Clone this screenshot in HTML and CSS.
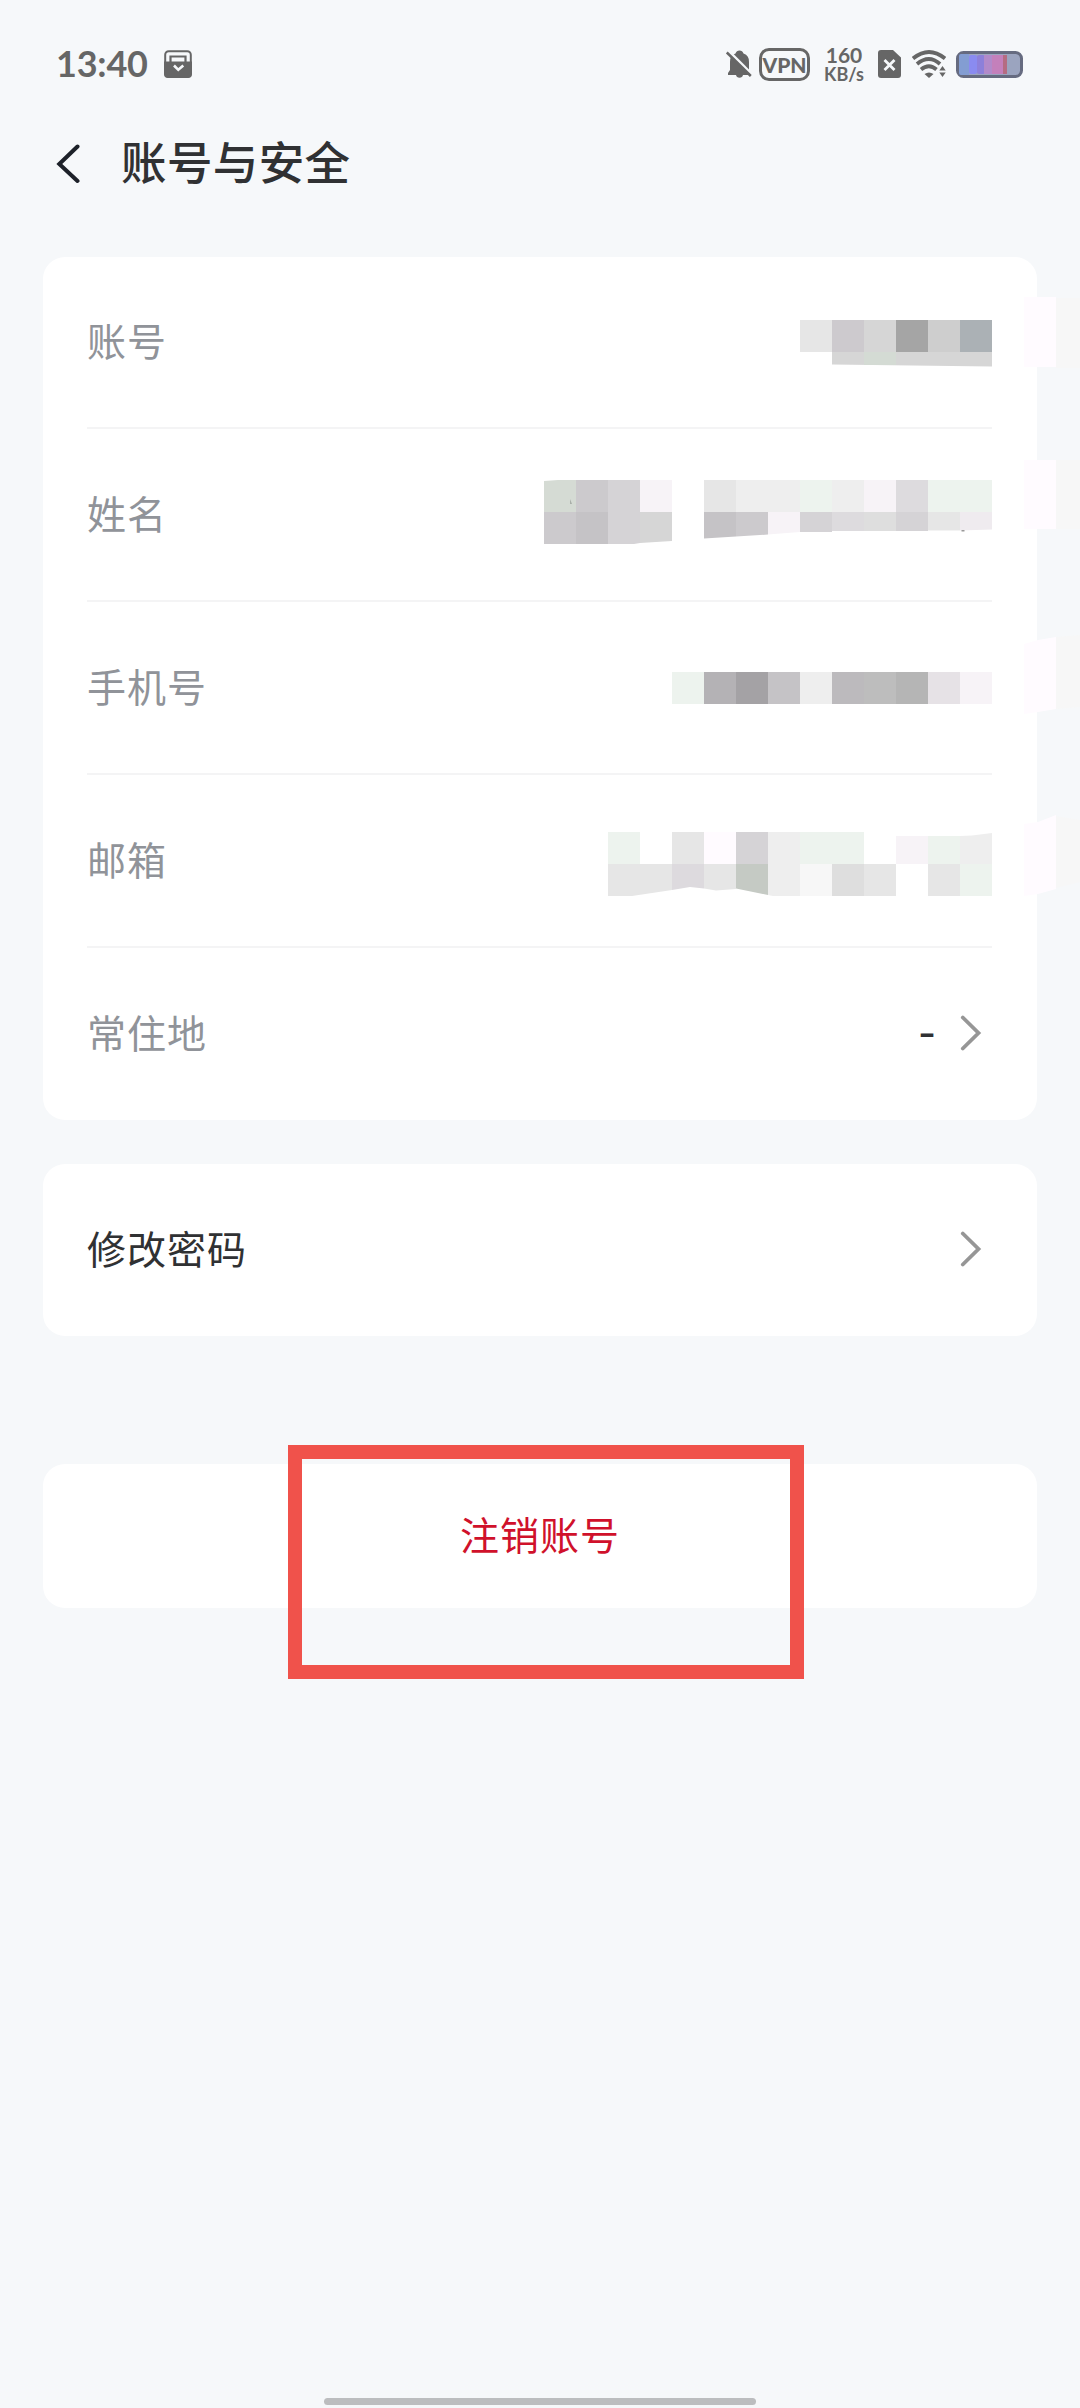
FILE: index.html
```html
<!DOCTYPE html>
<html lang="zh-CN">
<head>
<meta charset="utf-8">
<title>账号与安全</title>
<link rel="stylesheet" href="styles.css">
</head>
<body>
<div class="screen">
  <header class="status">
    <span class="clock">13:40</span>
    <svg class="wallet" width="28" height="28" viewBox="0 0 28 28"><rect x="1.200" y="1.200" width="25.600" height="25.600" rx="3.500" fill="none" stroke="#666" stroke-width="2"/><path d="M6.500 12V6.500h15V12" fill="none" stroke="#666" stroke-width="2.200"/><path d="M0 11.500h28V24a4 4 0 0 1-4 4H4a4 4 0 0 1-4-4z" fill="#666"/><path d="M10 15.500l4.300 4.300 5-4.300" fill="none" stroke="#f6f8fa" stroke-width="2.600"/></svg>
    <div class="status-right">
      <svg class="bell" width="26" height="30" viewBox="0 0 26 30"><path d="M2 25v-2l2-3v-8a8.500 8.500 0 0 1 5.500-8.500q1-3 4-3t4 3A8.500 8.500 0 0 1 23 12v8l1 3v2h-7a3.600 3.600 0 0 1-7 0z" fill="#666"/><path d="M1 -.5l26 26" stroke="#f6f8fa" stroke-width="3"/><path d="M.8 2.500l24 23.500" stroke="#666" stroke-width="2.600"/></svg>
      <span class="vpn">VPN</span>
      <span class="speed"><b>160</b><i>KB/s</i></span>
      <svg class="sim" width="23" height="28" viewBox="0 0 23 28"><path d="M3 0h12l8 7.500V25a3 3 0 0 1-3 3H3a3 3 0 0 1-3-3V3a3 3 0 0 1 3-3z" fill="#666"/><path d="M6.500 10l10 10M16.500 10l-10 10" stroke="#f6f8fa" stroke-width="2.800"/></svg>
      <svg class="wifi" width="34" height="28" viewBox="0 0 34 28"><g fill="none" stroke="#666" stroke-width="3.800"><path d="M1 8.500q16-13 32 0"/><path d="M5 14q12-10 23 0"/><path d="M9 19.500q8-6.500 15.500 0"/></g><path d="M12.500 24q4.500-3 9 0L17 28z" fill="#666"/><path d="M30.500 16l3.200 4.500h-6.400zM27.300 22.500h6.400l-3.200 4.500z" fill="#666"/></svg>
      <svg class="battery" width="67" height="27" viewBox="0 0 67 27"><rect x="1.500" y="1.500" width="64" height="24" rx="6" fill="#9ba4bf" stroke="#666b80" stroke-width="3"/><path d="M5 3h8v21H5q-2 0-2-2V5q0-2 2-2z" fill="#839dd2"/><rect x="13" y="4" width="8" height="19" rx="2" fill="#8a8bf0"/><rect x="21" y="4" width="8" height="19" rx="2" fill="#8d80da"/><path d="M28 4h9v19h-9z" fill="#b28aca"/><path d="M36 4h11v19H36z" fill="#c480bb"/><path d="M47 4h4v19h-4z" fill="#b56c82"/></svg>
    </div>
  </header>

  <nav class="title-bar">
    <svg width="26" height="42" viewBox="0 0 26 42"><path d="M23.500 3.500L5.300 21l18.200 17" fill="none" stroke="#1d2129" stroke-width="4" stroke-linecap="round" stroke-linejoin="miter"/></svg>
    <h1>账号与安全</h1>
  </nav>

  <main>
    <section class="card info">
      <div class="row"><span class="label">账号</span>
        <svg class="mosaic" width="192" height="170" viewBox="800 257 192 170">
          <path fill="#e6e6e6" d="M800 320h32v32h-32z"/><path fill="#cdcace" d="M832 320h32v32h-32z"/><path fill="#d6d6d6" d="M864 320h32v32h-32z"/><path fill="#a5a5a5" d="M896 320h32v32h-32z"/><path fill="#cecece" d="M928 320h32v32h-32z"/><path fill="#abb1b5" d="M960 320h32v32h-32z"/><path fill="#d6d6d6" d="M832 352h160v14.500l-160-2z"/><path fill="#d4dbd4" d="M864 352h32v13h-32z"/>
          <path fill="#fffbff" d="M1024 297h32v70h-32z"/><path fill="#f7f7f7" d="M1056 298h24v70h-24z"/>
        </svg></div>
      <div class="row"><span class="label">姓名</span>
        <svg class="mosaic" width="448" height="171" viewBox="544 429 448 171">
          <path fill="#d5dbd4" d="M544 481l14-1h18v32h-32z"/><path fill="#cccacd" d="M576 480h32v32h-32z"/><path fill="#d5d3d6" d="M608 480h32v32h-32z"/><path fill="#f7f3f7" d="M640 480h32v32h-32z"/>
          <path fill="#cccacd" d="M544 512h32v32h-32z"/><path fill="#c5c3c6" d="M576 512h32v32h-32z"/><path fill="#d5d3d6" d="M608 512h32v31l-6 1h-26z"/><path fill="#d6d6d6" d="M640 512h32v29l-32 2z"/>
          <path fill="#e6e6e6" d="M704 480h32v32h-32z"/><path fill="#eee" d="M736 480h64v32h-64zM832 480h32v32h-32z"/><path fill="#edf3ee" d="M800 480h32v32h-32zM928 480h64v32h-64z"/><path fill="#f7f3f7" d="M864 480h32v32h-32z"/><path fill="#dddbde" d="M896 480h32v32h-32z"/>
          <path fill="#c5c3c6" d="M704 512h32v24.500l-32 2z"/><path fill="#cccacd" d="M736 512h32v22.500l-32 2z"/><path fill="#f7f3f7" d="M768 512h32v20l-32 2.500z"/><path fill="#d5d3d6" d="M800 512h32v20h-32zM896 512h32v19h-32z"/><path fill="#dddbde" d="M832 512h32v19h-32z"/><path fill="#dedede" d="M864 512h32v19h-32z"/><path fill="#e6e6e6" d="M928 512h32v18.500h-32z"/><path fill="#efebef" d="M960 512h32v17.500l-32 1z"/><path fill="#999" d="M961.500 530h3v1.500h-3z"/><path fill="#a9afa9" d="M570 499l2 5h-2z"/>
          <path fill="#fffbff" d="M1024 460h32v69h-32z"/><path fill="#f7f7f7" d="M1056 460h24v69h-24z"/>
        </svg></div>
      <div class="row"><span class="label">手机号</span>
        <svg class="mosaic" width="320" height="171" viewBox="672 602 320 171">
          <path fill="#edf3ee" d="M672 672h32v32h-32z"/><path fill="#b4b2b5" d="M704 672h32v32h-32z"/><path fill="#a4a2a5" d="M736 672h32v32h-32z"/><path fill="#c5c3c6" d="M768 672h32v32h-32z"/><path fill="#eee" d="M800 672h32v32h-32z"/><path fill="#bcbabd" d="M832 672h32v32h-32z"/><path fill="#bdbdbd" d="M864 672h32v32h-32z"/><path fill="#b5b5b5" d="M896 672h32v32h-32z"/><path fill="#e6e2e6" d="M928 672h32v32h-32z"/><path fill="#f7f3f7" d="M960 672h32v32h-32z"/>
          <path fill="#fffbff" d="M1024 644l14-4 18-3v72l-18 3-14 2z"/><path fill="#f7f7f7" d="M1056 637l24-2v72l-24 2z"/>
        </svg></div>
      <div class="row"><span class="label">邮箱</span>
        <svg class="mosaic" width="384" height="171" viewBox="608 775 384 171">
          <path fill="#edf3ee" d="M608 832h32v32h-32zM800 832h64v32h-64zM928 836h32v28h-32zM960 864h32v32h-32z"/><path fill="#e6e6e6" d="M672 832h32v32h-32zM864 864h32v32h-32zM928 864h32v32h-32z"/><path fill="#fffbff" d="M704 832h32v32h-32z"/><path fill="#d5d3d6" d="M736 832h32v32h-32z"/><path fill="#eee" d="M768 832h32v64h-27l-5-1zM960 836l12-.5 20-2.500v31h-32z"/><path fill="#f7f3f7" d="M896 836h32v28h-32z"/>
          <path fill="#e6e6e6" d="M608 864h64v26l-40 6h-24zM704 864h32v25l-20 1.500-12-2z"/><path fill="#dddade" d="M672 864h32v24.500l-14-1.500-18 3z"/><path fill="#c5cac4" d="M736 864h32v31l-32-6.500z"/><path fill="#f7f7f7" d="M800 864h32v32h-32z"/><path fill="#dedede" d="M832 864h32v32h-32z"/>
          <path fill="#fffbff" d="M1024 824l14-2 18-7v74l-18 5-14 2z"/><path fill="#f7f7f7" d="M1056 816l24 4v62l-24 6z"/>
        </svg></div>
      <div class="row"><span class="label">常住地</span>
        <span class="value">-</span>
        <svg class="chevron" width="22" height="36" viewBox="0 0 22 36"><path d="M2.800 2.500L18.500 18 2.800 33.500" fill="none" stroke="#969696" stroke-width="3.800" stroke-linecap="round"/></svg></div>
    </section>

    <section class="card password">
      <span class="action">修改密码</span>
      <svg class="chevron" width="22" height="36" viewBox="0 0 22 36"><path d="M2.800 2.500L18.500 18 2.800 33.500" fill="none" stroke="#969696" stroke-width="3.800" stroke-linecap="round"/></svg>
    </section>

    <section class="card cancel"><span class="action">注销账号</span><div class="highlight"></div></section>
  </main>
  <div class="home-bar"></div>
</div>
</body>
</html>
```
FILE: styles.css
```css
* { box-sizing: border-box; }
body { margin: 0; background: #f6f8fa; font-family: "Noto Sans CJK SC", sans-serif; color: #303133; }
.screen { width: 1080px; height: 2408px; overflow: hidden; display: flex; flex-direction: column; background: #f6f8fa; }

.status { height: 128px; padding: 0 57px 0 56px; display: flex; align-items: center; color: #666; font-family: Lato, sans-serif; }
.clock { width: 94px; padding-bottom: 2px; font: 700 36px/38px Lato, sans-serif; letter-spacing: -0.2px; }
.wallet { margin-left: 14px; }
.status-right { margin-left: auto; display: flex; align-items: center; }
.bell { margin-top: 1px; }
.vpn { width: 51px; height: 33px; margin-left: 7px; border: 3px solid #666; border-radius: 10px; font: 900 21px/27px Lato, sans-serif; text-align: center; }
.speed { width: 38px; margin: 1px 0 0 15px; display: flex; flex-direction: column; align-items: center; }
.speed b { font: 700 21px/19px Lato, sans-serif; }
.speed i { font: 700 18px/20px Lato, sans-serif; }
.sim { margin-left: 15px; }
.wifi { margin-left: 11px; }
.battery { margin-left: 10px; }

.title-bar { height: 72px; padding-left: 54px; display: flex; align-items: center; gap: 41px; }
.title-bar h1 { margin: 0; padding-bottom: 7px; font-size: 45.500px; font-weight: 500; line-height: 65px; letter-spacing: 0.4px; }

main { padding: 57px 43px 0; }
.card { background: #fff; border-radius: 22px; }
.info { height: 863px; padding: 0 45px 0 44px; }
.row { height: 173px; display: flex; align-items: center; border-bottom: 2px solid #f4f4f5; font-size: 39px; }
.row:first-child { height: 172px; }
.row:last-child { height: 172px; border-bottom: 0; }
.label { padding-bottom: 6px; color: #909399; letter-spacing: 1px; }
.mosaic { margin-left: auto; overflow: visible; flex: none; }
.value { margin-left: auto; padding-bottom: 3px; font: 500 39px/44px Inter, sans-serif; }
.chevron { margin: -2px 10px 0 24px; }
.action { padding-bottom: 6px; letter-spacing: 1px; }
.password { height: 172px; margin-top: 44px; padding: 0 45px 0 44px; display: flex; align-items: center; justify-content: space-between; font-size: 39px; }
.cancel { position: relative; height: 144px; margin-top: 128px; display: flex; align-items: center; justify-content: center; font-size: 39px; color: #d0112b; }
.highlight { position: absolute; left: 245px; top: -19px; width: 516px; height: 234px; border: 14px solid #f0524b; }
.home-bar { width: 432px; height: 7px; margin: auto auto 3px; border-radius: 4px; background: #bcbdbf; }
```
